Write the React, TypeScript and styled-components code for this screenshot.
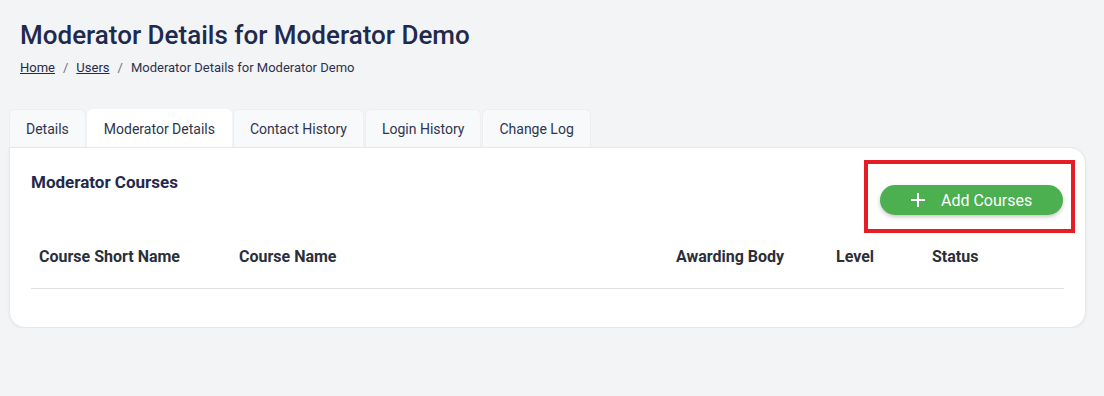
import styled, { createGlobalStyle } from "styled-components";

const GlobalStyle = createGlobalStyle`
    body {
        margin: 0;
        background: #f3f4f6;
        font-family: Roboto, "Liberation Sans", Arial, sans-serif;
        color: #1f2a4d;
    }
`;

const Page = styled.div`
    padding: 16px 18px 0 9px;
`;

const PageHeader = styled.div`
    padding-left: 11px;
`;

const Title = styled.h1`
    margin: 0;
    font-size: 26px;
    line-height: 38px;
    font-weight: 500;
    color: #1f2a4d;
`;

const Breadcrumb = styled.nav`
    display: flex;
    align-items: center;
    gap: 8px;
    margin-top: 5px;
    font-size: 13px;
    line-height: 18px;
    color: #2b3350;
`;

const Crumb = styled.a`
    color: #1f2a4d;
    text-decoration: underline;
    cursor: pointer;
`;

const Separator = styled.span`
    color: #6b7280;
`;

const TabBar = styled.div`
    display: flex;
    gap: 1px;
    margin-top: 32px;
`;

const Tab = styled.button<{ $active?: boolean }>`
    height: 38px;
    padding: 0 16px;
    margin-bottom: ${(p) => (p.$active ? "-1px" : "0")};
    border: 1px solid ${(p) => (p.$active ? "#ffffff" : "#eceef1")};
    border-bottom: none;
    border-radius: 6px 6px 0 0;
    background: ${(p) => (p.$active ? "#ffffff" : "#f8f9fa")};
    font-family: inherit;
    font-size: 14px;
    color: #2e3550;
    cursor: pointer;
`;

const Card = styled.section`
    position: relative;
    background: #ffffff;
    border: 1px solid #e6e8eb;
    border-radius: 0 16px 16px 16px;
    box-shadow: 0 1px 3px rgba(0, 0, 0, 0.06);
    padding: 24px 21px 38px 21px;
`;

const CardHeader = styled.div`
    display: flex;
    justify-content: space-between;
    align-items: flex-start;
`;

const CardTitle = styled.h2`
    margin: 0;
    font-size: 17px;
    line-height: 20px;
    font-weight: 700;
    color: #1f2a4d;
`;

const ButtonSlot = styled.div`
    position: relative;
    margin-top: 13px;
    margin-right: 1px;
`;

// red annotation frame drawn over the button
const Highlight = styled.div`
    position: absolute;
    top: -25px;
    bottom: -18px;
    left: -16px;
    right: -12px;
    border: 4px solid #e71d25;
    pointer-events: none;
`;

const AddButton = styled.button`
    display: flex;
    align-items: center;
    gap: 16px;
    height: 30px;
    width: 183px;
    padding: 0 0 0 31px;
    border: none;
    border-radius: 15px;
    background: #4caf50;
    color: #ffffff;
    font-family: inherit;
    font-size: 16px;
    box-shadow: 0 2px 4px rgba(0, 0, 0, 0.22);
    cursor: pointer;
`;

const Table = styled.div`
    margin-top: 19px;
`;

const HeadRow = styled.div`
    display: grid;
    grid-template-columns: 200px 437px 160px 96px 1fr;
    padding: 12px 0 20px 8px;
    border-bottom: 1px solid #dee0e3;
`;

const HeadCell = styled.div`
    font-size: 16px;
    line-height: 22px;
    font-weight: 700;
    color: #2b2f3a;
`;

const tabs = ["Details", "Moderator Details", "Contact History", "Login History", "Change Log"];
const columns = ["Course Short Name", "Course Name", "Awarding Body", "Level", "Status"];

function App() {
    return (
        <Page>
            <GlobalStyle />
            <PageHeader>
                <Title>Moderator Details for Moderator Demo</Title>
                <Breadcrumb>
                    <Crumb>Home</Crumb>
                    <Separator>/</Separator>
                    <Crumb>Users</Crumb>
                    <Separator>/</Separator>
                    <span>Moderator Details for Moderator Demo</span>
                </Breadcrumb>
            </PageHeader>

            <TabBar>
                {tabs.map((t) => (
                    <Tab key={t} $active={t === "Moderator Details"}>
                        {t}
                    </Tab>
                ))}
            </TabBar>

            <Card>
                <CardHeader>
                    <CardTitle>Moderator Courses</CardTitle>
                    <ButtonSlot>
                        <AddButton>
                            <svg width="14" height="14" viewBox="0 0 14 14">
                                <path d="M7 0v14M0 7h14" stroke="#fff" strokeWidth="2" />
                            </svg>
                            Add Courses
                        </AddButton>
                        <Highlight />
                    </ButtonSlot>
                </CardHeader>

                <Table>
                    <HeadRow>
                        {columns.map((c) => (
                            <HeadCell key={c}>{c}</HeadCell>
                        ))}
                    </HeadRow>
                </Table>
            </Card>
        </Page>
    );
}
export default App;
